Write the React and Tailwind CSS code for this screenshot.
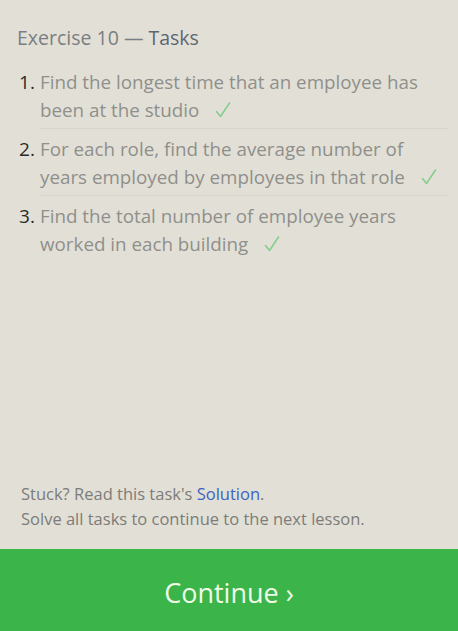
import React from 'react';

const tasks = [
  'Find the longest time that an employee has been at the studio',
  'For each role, find the average number of years employed by employees in that role',
  'Find the total number of employee years worked in each building',
];

const Check = () => (
  <svg
    className="inline-block ml-[16px] align-[-1px]"
    width="16"
    height="16"
    viewBox="0 0 16 16"
    fill="none"
  >
    <path d="M1.5 9.5 L5.5 14.5 L14.5 1" stroke="#86cd8f" strokeWidth="1.6" strokeLinecap="round" strokeLinejoin="round" />
  </svg>
);

export default function App() {
  return (
    <div
      className="flex flex-col h-screen bg-[#e2e0d6]"
      style={{ fontFamily: '"Open Sans", "Noto Sans", sans-serif' }}
    >
      <div className="flex-1 pt-[24px] pr-[10px] pl-[17px]">
        {/* Header */}
        <h2 className="text-[19.5px] leading-[28px] text-[#7b7e82]">
          Exercise 10 — <span className="text-[#5d6673]">Tasks</span>
        </h2>

        {/* Task list */}
        <ol className="mt-[16px]">
          {tasks.map((t, i) => (
            <li key={i} className="flex">
              <span className="w-[23px] shrink-0 pl-[2px] text-[19px] leading-[28px] text-[#2a2a2a]">
                {i + 1}.
              </span>
              <div
                className={`flex-1 pb-[4px] text-[18.8px] leading-[28px] text-[#8f8f8c] ${
                  i < tasks.length - 1 ? 'border-b border-[#d7d5cb] mb-[6px]' : ''
                }`}
              >
                {t}
                <Check />
              </div>
            </li>
          ))}
        </ol>
      </div>

      {/* Footer */}
      <div className="px-[21px] pb-[18px] text-[16.5px] leading-[25px] text-[#7c7c7a]">
        <p>
          Stuck? Read this task's <span className="text-[#3d63c4]">Solution</span>.
        </p>
        <p>Solve all tasks to continue to the next lesson.</p>
      </div>

      <button className="h-[82px] shrink-0 pt-[6px] bg-[#3bb44a] text-[#f0fbe8] text-[27px]">
        Continue ›
      </button>
    </div>
  );
}
